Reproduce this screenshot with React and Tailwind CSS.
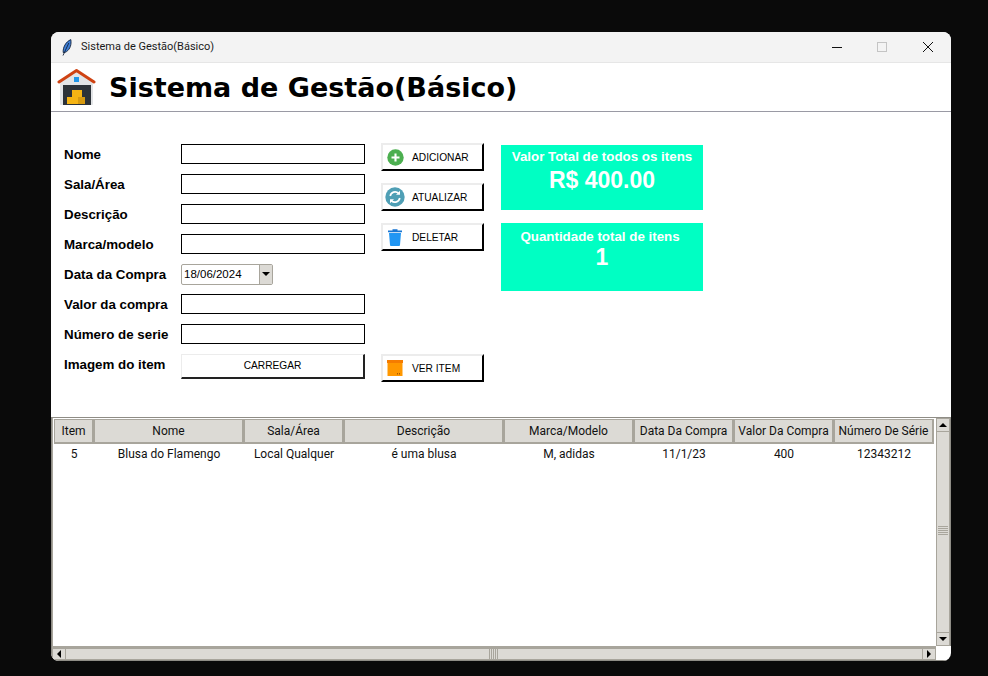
import React from 'react';

const labels = ['Nome', 'Sala/Área', 'Descrição', 'Marca/modelo', 'Data da Compra', 'Valor da compra', 'Número de serie', 'Imagem do item'];

const columns = [
  { title: 'Item', value: '5', width: 'w-[40px]' },
  { title: 'Nome', value: 'Blusa do Flamengo', width: 'w-[150px]' },
  { title: 'Sala/Área', value: 'Local Qualquer', width: 'w-[100px]' },
  { title: 'Descrição', value: 'é uma blusa', width: 'w-[160px]' },
  { title: 'Marca/Modelo', value: 'M, adidas', width: 'w-[130px]' },
  { title: 'Data Da Compra', value: '11/1/23', width: 'w-[100px]' },
  { title: 'Valor Da Compra', value: '400', width: 'w-[100px]' },
  { title: 'Número De Série', value: '12343212', width: 'w-[100px]' },
];

const FeatherIcon = () => (
  <svg width="10" height="17" viewBox="0 0 10 17">
    <path d="M1.2 13.5C0.8 8.5 3.5 3 8.8 0.6 9.6 5 8.4 10 4.5 12.6 3.4 13.4 2.4 13.8 1.2 13.5Z" fill="#3f7fd6" stroke="#14233a" strokeWidth="0.9" />
    <path d="M1 16.5 6.8 4" stroke="#14233a" strokeWidth="0.9" fill="none" />
  </svg>
);

const HouseIcon = () => (
  <svg width="40" height="38" viewBox="0 0 40 38">
    <path d="M3 13 19.5 3 36 13v23a1 1 0 0 1-1 1H4a1 1 0 0 1-1-1Z" fill="#e2e4e6" />
    <path d="M2 14 19.5 2.5 37 14" fill="none" stroke="#cf4313" strokeWidth="3" strokeLinecap="round" strokeLinejoin="round" />
    <rect x="17" y="9" width="5" height="5" fill="#2196e8" />
    <rect x="6" y="17" width="28" height="20" fill="#2c3238" />
    <rect x="15" y="22" width="10" height="7" fill="#f5b414" />
    <rect x="10" y="29" width="11" height="7" fill="#f5b414" />
    <rect x="21" y="29" width="7" height="7" fill="#d79a10" />
  </svg>
);

const PlusIcon = () => (
  <svg width="17" height="17" viewBox="0 0 17 17">
    <circle cx="8.5" cy="8.5" r="8.2" fill="#4caf50" />
    <path d="M8.5 4.5v8M4.5 8.5h8" stroke="#fff" strokeWidth="2.1" />
  </svg>
);

const RefreshIcon = () => (
  <svg width="20" height="20" viewBox="0 0 20 20">
    <circle cx="10" cy="10" r="9.7" fill="#4f9fb5" />
    <path d="M5.2 9a5 5 0 0 1 8.3-2.8M14.8 11a5 5 0 0 1-8.3 2.8" fill="none" stroke="#fff" strokeWidth="1.7" />
    <path d="M15 3.8v4h-4ZM5 16.2v-4h4Z" fill="#fff" />
  </svg>
);

const TrashIcon = () => (
  <svg width="14" height="17" viewBox="0 0 14 17">
    <path d="M4.5 0.3h5v1.2H14v1.8H0V1.5h4.5Z" fill="#1976d2" />
    <path d="M1 4h12l-1 12a1 1 0 0 1-1 1H3a1 1 0 0 1-1-1Z" fill="#2196f3" />
  </svg>
);

const BoxIcon = () => (
  <svg width="16" height="16" viewBox="0 0 16 16">
    <rect x="0" y="0" width="16" height="3" fill="#f57c00" />
    <rect x="0.5" y="3" width="15" height="13" fill="#ff9800" />
    <path d="M10.5 13v1.5M12.5 13v1.5" stroke="#a85a00" strokeWidth="1" />
  </svg>
);

const RaisedButton = ({ icon, text }) => (
  <div className="flex h-[28px] w-[103px] items-center border-2 border-t-[#ececec] border-r-black border-b-black border-l-[#ececec] bg-white">
    <div className="flex w-[24px] shrink-0 items-center justify-center">{icon}</div>
    <span className="mt-[1px] ml-[5px] text-[10.2px] text-black">{text}</span>
  </div>
);

const ArrowButton = ({ className, children }) => (
  <div className={`flex shrink-0 items-center justify-center border border-[#a8a59c] bg-[#dcdad5] ${className}`}>
    {children}
  </div>
);

export default function App() {
  return (
    <div className="h-[676px] w-[988px] overflow-hidden bg-[#0a0a0a] pt-[32px] pl-[51px] font-['Liberation_Sans',sans-serif]">
      <div className="flex h-[629px] w-[900px] flex-col overflow-hidden rounded-[8px] bg-white">
        {/* title bar */}
        <div className="flex h-[31px] shrink-0 items-center border-b border-[#e6e6e6] bg-[#f3f3f3]">
          <div className="ml-[11px] flex w-[19px] items-center">
            <FeatherIcon />
          </div>
          <span className="font-['Roboto',sans-serif] text-[11px] text-[#1a1a1a]">Sistema de Gestão(Básico)</span>
          <div className="ml-auto flex items-center">
            <svg width="12" height="12" viewBox="0 0 12 12" className="mr-[33px]">
              <path d="M1 6.5h10" stroke="#111" strokeWidth="1" />
            </svg>
            <svg width="12" height="12" viewBox="0 0 12 12" className="mr-[34px]">
              <rect x="1.5" y="1.5" width="9" height="9" fill="none" stroke="#c4c4c4" strokeWidth="1" />
            </svg>
            <svg width="12" height="12" viewBox="0 0 12 12" className="mr-[17px]">
              <path d="M1 1l10 10M11 1 1 11" stroke="#111" strokeWidth="1" />
            </svg>
          </div>
        </div>

        {/* header */}
        <div className="flex h-[49px] shrink-0 items-center border-b border-[#9a9aa4] bg-white">
          <div className="ml-[6px] flex w-[52px] items-center">
            <HouseIcon />
          </div>
          <h1 className="pt-[3px] font-['DejaVu_Sans',sans-serif] text-[27px] font-bold text-black">Sistema de Gestão(Básico)</h1>
        </div>

        {/* form */}
        <div className="flex h-[305px] shrink-0 bg-white pl-[13px]">
          <div className="w-[301px] pt-[27px]">
            {labels.map((label, i) => (
              <div key={label} className="flex h-[30px] items-center">
                <span className="mt-[2px] w-[117px] shrink-0 text-[13.33px] font-bold text-black">{label}</span>
                {i === 4 ? (
                  <div className="flex h-[21px] w-[92px] items-center rounded-[2px] border border-[#a8a59c] bg-white">
                    <span className="mt-[1px] ml-[2px] flex-1 text-[11.5px] text-black">18/06/2024</span>
                    <div className="flex h-full w-[13px] items-center justify-center border-l border-[#a8a59c] bg-[#dcdad5]">
                      <div className="h-0 w-0 border-t-[4px] border-r-[4px] border-l-[4px] border-t-black border-r-transparent border-l-transparent" />
                    </div>
                  </div>
                ) : i === 7 ? (
                  <div className="mt-[4px] flex h-[25px] w-[184px] items-center justify-center border-t border-r-2 border-b-2 border-l border-t-[#ececec] border-r-[#222] border-b-[#222] border-l-[#ececec] bg-white text-[10.2px] text-black">
                    CARREGAR
                  </div>
                ) : (
                  <div className="h-[20px] w-[184px] border border-black bg-white" />
                )}
              </div>
            ))}
          </div>

          <div className="ml-[16px] flex w-[103px] flex-col pt-[31px]">
            <div className="flex flex-col gap-[12px]">
              <RaisedButton icon={<PlusIcon />} text="ADICIONAR" />
              <RaisedButton icon={<RefreshIcon />} text="ATUALIZAR" />
              <RaisedButton icon={<TrashIcon />} text="DELETAR" />
            </div>
            <div className="mt-[103px]">
              <RaisedButton icon={<BoxIcon />} text="VER ITEM" />
            </div>
          </div>

          <div className="ml-[17px] flex w-[202px] flex-col gap-[13px] pt-[33px] text-center font-bold text-white">
            <div className="h-[65px] bg-[#00ffc3] pt-[4px]">
              <div className="text-[13.33px] leading-[16px]">Valor Total de todos os itens</div>
              <div className="mt-[1px] text-[23px] leading-[28px]">R$ 400.00</div>
            </div>
            <div className="h-[68px] bg-[#00ffc3] pt-[6px]">
              <div className="pr-[4px] text-[13.33px] leading-[16px]">Quantidade total de itens</div>
              <div className="text-[23px] leading-[24px]">1</div>
            </div>
          </div>
        </div>

        {/* table */}
        <div className="flex min-h-0 flex-1 flex-col border-t border-l border-[#8f8d86] font-['Roboto',sans-serif]">
          <div className="flex min-h-0 flex-1">
            <div className="w-[884px] shrink-0 border-l border-[#a8a59c] pt-[1px] pl-[1px]">
              <div className="flex h-[25px]">
                {columns.map(col => (
                  <div key={col.title} className={`${col.width} flex items-center justify-center border-t border-r-2 border-b-2 border-l border-[#a8a59c] bg-[#dcdad5] text-[12px] whitespace-nowrap text-[#111]`}>
                    {col.title}
                  </div>
                ))}
              </div>
              <div className="flex h-[20px]">
                {columns.map(col => (
                  <div key={col.title} className={`${col.width} flex items-center justify-center text-[12px] whitespace-nowrap text-[#111]`}>
                    {col.value}
                  </div>
                ))}
              </div>
            </div>

            {/* vertical scrollbar */}
            <div className="flex w-[15px] shrink-0 flex-col border-r border-[#8f8d86]">
              <ArrowButton className="h-[14px]">
                <div className="h-0 w-0 border-r-[4px] border-b-[4px] border-l-[4px] border-r-transparent border-b-black border-l-transparent" />
              </ArrowButton>
              <div className="flex flex-1 flex-col items-center justify-center gap-[1px] border-x border-[#a8a59c] bg-[#dcdad5] pb-[3px]">
                {[0, 1, 2, 3, 4].map(i => (
                  <div key={i} className="h-px w-[10px] bg-[#a8a59c]" />
                ))}
              </div>
              <ArrowButton className="h-[14px]">
                <div className="h-0 w-0 border-t-[4px] border-r-[4px] border-l-[4px] border-t-black border-r-transparent border-l-transparent" />
              </ArrowButton>
            </div>
          </div>

          {/* horizontal scrollbar */}
          <div className="flex h-[15px] shrink-0 border-b border-[#8f8d86]">
            <div className="flex w-[884px] shrink-0 border-t-2 border-[#a8a59c]">
              <ArrowButton className="w-[14px]">
                <div className="h-0 w-0 border-t-[4px] border-r-[4px] border-b-[4px] border-t-transparent border-r-black border-b-transparent" />
              </ArrowButton>
              <div className="flex flex-1 items-center justify-center gap-[1px] border-y border-[#a8a59c] bg-[#dcdad5] pr-[2px]">
                {[0, 1, 2, 3, 4].map(i => (
                  <div key={i} className="h-[10px] w-px bg-[#a8a59c]" />
                ))}
              </div>
              <ArrowButton className="w-[14px]">
                <div className="h-0 w-0 border-t-[4px] border-b-[4px] border-l-[4px] border-t-transparent border-b-transparent border-l-black" />
              </ArrowButton>
            </div>
          </div>
        </div>
      </div>
    </div>
  );
}
